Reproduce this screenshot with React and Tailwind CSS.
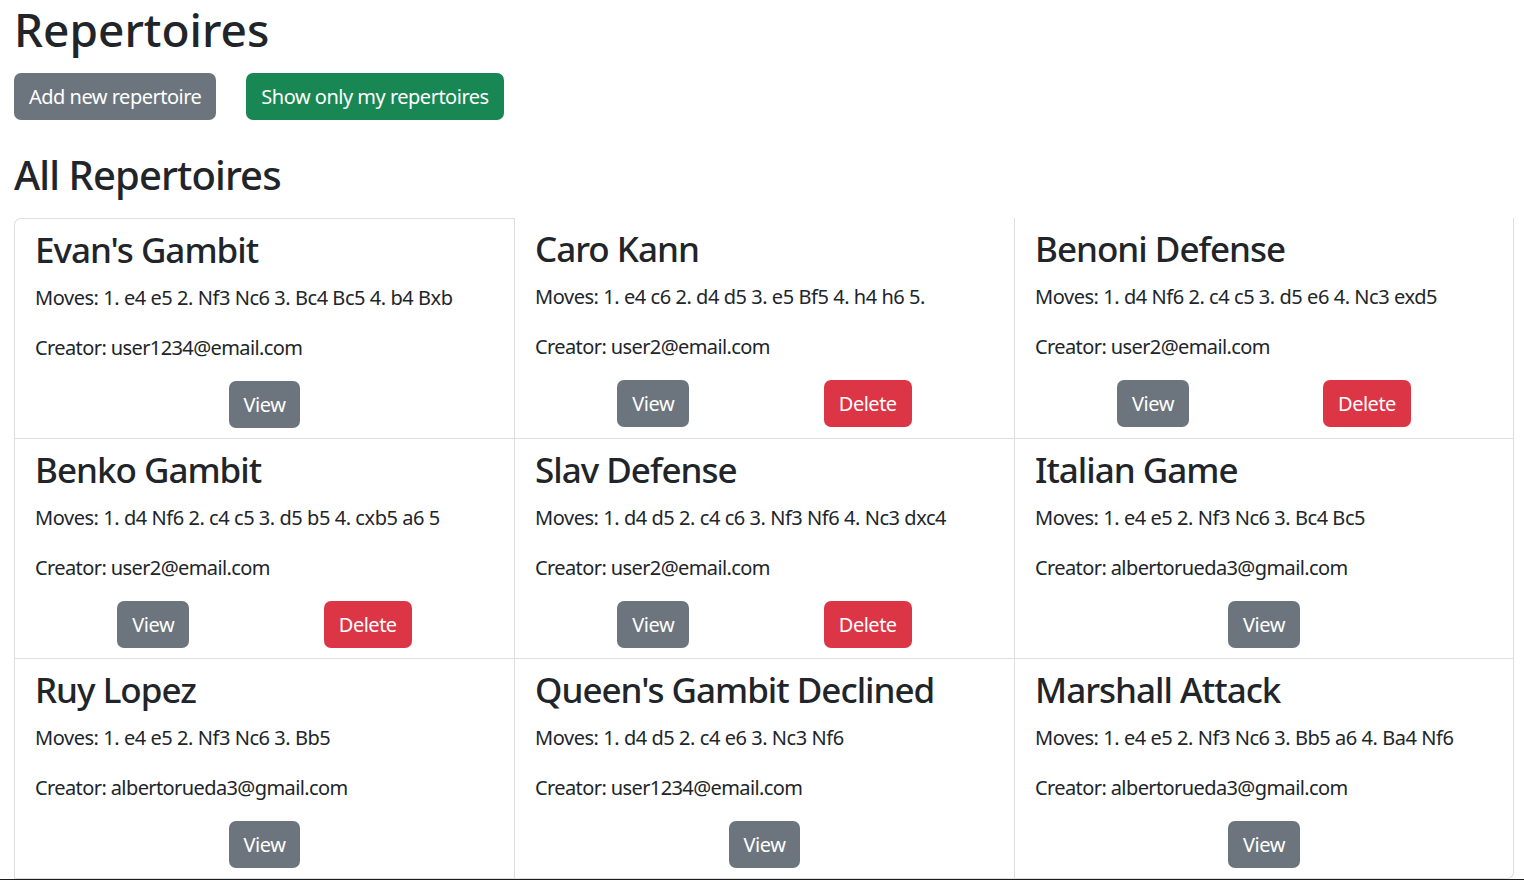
import React from 'react';

const repertoires = [
  { id: 1, name: "Evan's Gambit", moves: '1. e4 e5 2. Nf3 Nc6 3. Bc4 Bc5 4. b4 Bxb', creator: 'user1234@email.com', mine: false },
  { id: 2, name: 'Caro Kann', moves: '1. e4 c6 2. d4 d5 3. e5 Bf5 4. h4 h6 5.', creator: 'user2@email.com', mine: true },
  { id: 3, name: 'Benoni Defense', moves: '1. d4 Nf6 2. c4 c5 3. d5 e6 4. Nc3 exd5', creator: 'user2@email.com', mine: true },
  { id: 4, name: 'Benko Gambit', moves: '1. d4 Nf6 2. c4 c5 3. d5 b5 4. cxb5 a6 5', creator: 'user2@email.com', mine: true },
  { id: 5, name: 'Slav Defense', moves: '1. d4 d5 2. c4 c6 3. Nf3 Nf6 4. Nc3 dxc4', creator: 'user2@email.com', mine: true },
  { id: 6, name: 'Italian Game', moves: '1. e4 e5 2. Nf3 Nc6 3. Bc4 Bc5', creator: 'albertorueda3@gmail.com', mine: false },
  { id: 7, name: 'Ruy Lopez', moves: '1. e4 e5 2. Nf3 Nc6 3. Bb5', creator: 'albertorueda3@gmail.com', mine: false },
  { id: 8, name: "Queen's Gambit Declined", moves: '1. d4 d5 2. c4 e6 3. Nc3 Nf6', creator: 'user1234@email.com', mine: false },
  { id: 9, name: 'Marshall Attack', moves: '1. e4 e5 2. Nf3 Nc6 3. Bb5 a6 4. Ba4 Nf6', creator: 'albertorueda3@gmail.com', mine: false },
];

const btn = 'h-[47px] px-[15px] rounded-[7px] text-white text-[20px] leading-[30px] tracking-[-0.5px]';

const RepertoireCard = ({ rep, index }) => {
  const first = index === 0;
  const lastCol = index % 3 === 2;
  return (
    <div
      className={`border-l border-b border-[#dedede] px-[20px] pt-[10px] pb-[10px] ${
        first ? 'border-t rounded-tl-[7px]' : ''
      } ${lastCol ? 'border-r' : ''} ${index === 8 ? 'rounded-br-[7px]' : ''}`}
    >
      <h3 className="text-[35px] leading-[42px] font-medium tracking-[-1px] mb-[12px]">{rep.name}</h3>
      <p className="text-[20px] leading-[30px] tracking-[-0.45px] mb-[20px]">Moves: {rep.moves}</p>
      <p className="text-[20px] leading-[30px] tracking-[-0.6px] mb-[18px]">Creator: {rep.creator}</p>
      <div className="flex justify-around px-[15px]">
        <button className={`${btn} bg-[#6c757d]`}>View</button>
        {rep.mine && <button className={`${btn} bg-[#dc3545]`}>Delete</button>}
      </div>
    </div>
  );
};

const App = () => {
  return (
    <div className="min-h-screen bg-white text-[#212529] font-['Noto_Sans','Open_Sans',sans-serif] px-[14px]">
      <h1 className="text-[46px] leading-[58px] font-medium mb-[15px]">Repertoires</h1>
      <div className="flex gap-[30px]">
        <button className={`${btn} bg-[#6c757d]`}>Add new repertoire</button>
        <button className={`${btn} bg-[#198754]`}>Show only my repertoires</button>
      </div>

      <h2 className="text-[40px] leading-[48px] font-medium tracking-[-0.9px] mt-[31px] mb-[19px]">All Repertoires</h2>
      <div className="grid grid-cols-[500px_500px_500px]">
        {repertoires.map((rep, i) => (
          <RepertoireCard key={rep.id} rep={rep} index={i} />
        ))}
      </div>
      <div className="h-[3px] bg-[#1e1e1e] -mx-[14px]" />
    </div>
  );
};

export default App;
